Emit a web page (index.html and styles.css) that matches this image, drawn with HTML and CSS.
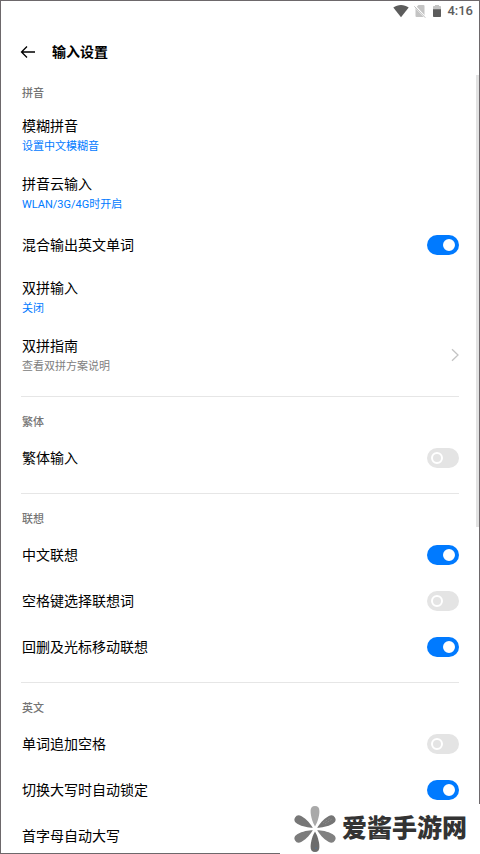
FILE: index.html
```html
<!DOCTYPE html>
<html lang="zh-CN">
<head>
<meta charset="utf-8">
<meta name="viewport" content="width=device-width, initial-scale=1">
<title>输入设置</title>
<link rel="stylesheet" href="styles.css">
</head>
<body>
<div class="screen">
  <div class="status-bar">
    <svg class="wifi" viewBox="0 0 16 14" aria-hidden="true"><path d="M0.3 3.6C4.8 0.1 11.2 0.1 15.7 3.6L8 13.3Z"/></svg>
    <svg class="sim" viewBox="0 0 12 14" aria-hidden="true"><path class="card" d="M4.5 1H9.5Q10.5 1 10.5 2V12Q10.5 13 9.5 13H2.5Q1.5 13 1.5 12V4Z"/><path class="gap" d="M0 1.2L12 14.2"/><path class="slash" d="M0.3 2.3L11.3 13.7"/></svg>
    <svg class="battery" viewBox="0 0 10 14" aria-hidden="true"><path class="empty" d="M3 1H7V2H8.2Q9 2 9 2.8V6H1V2.8Q1 2 1.8 2H3Z"/><path d="M1 5.3H9V12.2Q9 13 8.2 13H1.8Q1 13 1 12.2Z"/></svg>
    <span class="clock">4:16</span>
  </div>
  <header class="title-bar">
    <button class="back" type="button" aria-label="返回">
      <svg viewBox="0 0 16 14" aria-hidden="true"><path d="M15 7H1.5M7 1.5L1.5 7L7 12.5"/></svg>
    </button>
    <h1>输入设置</h1>
  </header>
  <main class="settings">
    <section class="group">
      <h2>拼音</h2>
      <a class="row tall" href="#fuzzy"><span class="text"><span class="name">模糊拼音</span><span class="value">设置中文模糊音</span></span></a>
      <a class="row tall" href="#cloud"><span class="text"><span class="name">拼音云输入</span><span class="value">WLAN/3G/4G时开启</span></span></a>
      <label class="row"><span class="name">混合输出英文单词</span><input class="switch" type="checkbox" checked></label>
      <a class="row tall" href="#double"><span class="text"><span class="name">双拼输入</span><span class="value">关闭</span></span></a>
      <a class="row tall" href="#guide"><span class="text"><span class="name">双拼指南</span><span class="value hint">查看双拼方案说明</span></span>
        <svg class="chevron" viewBox="0 0 8 14" aria-hidden="true"><path d="M1 1.2L7 7L1 12.8"/></svg></a>
    </section>
    <section class="group">
      <h2>繁体</h2>
      <label class="row"><span class="name">繁体输入</span><input class="switch" type="checkbox"></label>
    </section>
    <section class="group">
      <h2>联想</h2>
      <label class="row"><span class="name">中文联想</span><input class="switch" type="checkbox" checked></label>
      <label class="row"><span class="name">空格键选择联想词</span><input class="switch" type="checkbox"></label>
      <label class="row"><span class="name">回删及光标移动联想</span><input class="switch" type="checkbox" checked></label>
    </section>
    <section class="group">
      <h2>英文</h2>
      <label class="row"><span class="name">单词追加空格</span><input class="switch" type="checkbox"></label>
      <label class="row"><span class="name">切换大写时自动锁定</span><input class="switch" type="checkbox" checked></label>
      <label class="row"><span class="name">首字母自动大写</span><input class="switch" type="checkbox" checked></label>
    </section>
  </main>
  <div class="scroll-thumb"></div>
</div>
<div class="watermark">
  <svg viewBox="0 0 44 48" aria-hidden="true">
    <defs><path id="petal" d="M22 21.5C20 18 17.6 12 17.6 6Q17.6 1 22 1Q26.4 1 26.4 6C26.4 12 24 18 22 21.5Z"/></defs>
    <use href="#petal" fill="#a9a9a9"/>
    <use href="#petal" fill="#757575" transform="rotate(60 22 24)"/>
    <use href="#petal" fill="#808080" transform="rotate(120 22 24)"/>
    <use href="#petal" fill="#6c6c6c" transform="rotate(180 22 24)"/>
    <use href="#petal" fill="#7c7c7c" transform="rotate(240 22 24)"/>
    <use href="#petal" fill="#777777" transform="rotate(300 22 24)"/>
    <path d="M30 18L37 13M32 19L39 14" stroke="#929292" stroke-width="1" stroke-dasharray="1 1"/>
    <circle cx="23" cy="43" r="0.6" fill="#397fc8"/>
  </svg>
  <span>爱酱手游网</span>
</div>
</body>
</html>
```
FILE: styles.css
```css
*,
*::before {
  box-sizing: border-box;
}

body {
  margin: 0;
  background: #fff;
  color: #000;
  font-family: Roboto, "Noto Sans CJK SC", sans-serif;
  font-size: 14px;
}

.screen {
  position: relative;
  display: flex;
  flex-direction: column;
  height: 100vh;
  border: 1px solid #6d686b;
}

.status-bar {
  display: flex;
  flex: none;
  align-items: center;
  justify-content: flex-end;
  height: 20px;
  padding-right: 6px;
  fill: #5c5c5c;
  color: #5c5c5c;
}

.status-bar svg {
  height: 14px;
}

.wifi {
  width: 16px;
  margin-right: 5px;
}

.sim {
  width: 12px;
  margin-right: 6px;
}

.sim path {
  fill: none;
}

.sim .card {
  fill: #c4c4c4;
}

.sim .gap {
  stroke: #fff;
  stroke-width: 2;
}

.sim .slash {
  stroke: #bdbdbd;
}

.battery {
  width: 10px;
  margin-right: 5px;
}

.battery .empty {
  fill: #c4c4c4;
}

.clock {
  font-size: 13px;
  font-weight: 500;
  line-height: 20px;
}

.title-bar {
  display: flex;
  flex: none;
  align-items: center;
  height: 61px;
  padding: 0 19px;
  gap: 16px;
}

.back {
  display: flex;
  padding: 0;
  border: 0;
  background: none;
}

.back svg {
  width: 16px;
  height: 14px;
  fill: none;
  stroke: #000;
  stroke-width: 1.3;
}

h1 {
  margin: 0;
  font-size: 14px;
  font-weight: 700;
  line-height: 20px;
}

.settings {
  flex: 1;
  min-height: 0;
  overflow-y: auto;
  padding: 0 20px;
  scrollbar-width: none;
}

.group + .group {
  border-top: 1px solid #e6e6e6;
  margin-top: 12px;
  padding-top: 14px;
}

h2 {
  height: 24px;
  margin: 0;
  padding-left: 1px;
  color: #757575;
  font-size: 11px;
  font-weight: 500;
  line-height: 24px;
}

.row {
  display: flex;
  align-items: center;
  justify-content: space-between;
  min-height: 46px;
  padding-left: 1px;
  color: inherit;
  text-decoration: none;
}

.tall {
  min-height: 58px;
}

.text {
  display: flex;
  flex-direction: column;
  gap: 2px;
}

.name {
  line-height: 22px;
}

.value {
  color: #007aff;
  font-size: 11px;
  line-height: 16px;
}

.hint {
  color: #808080;
}

.chevron {
  width: 8px;
  height: 14px;
  fill: none;
  stroke: #c4c4c4;
  stroke-width: 1.3;
}

.switch {
  display: flex;
  align-items: center;
  width: 32px;
  height: 20px;
  margin: 0;
  padding: 0 4px;
  border-radius: 10px;
  background: #e4e4e4;
  appearance: none;
}

.switch::before {
  width: 12px;
  height: 12px;
  border: 2px solid #fff;
  border-radius: 50%;
  content: "";
}

.switch:checked {
  justify-content: flex-end;
  background: #007aff;
}

.switch:checked::before {
  background: #fff;
}

.scroll-thumb {
  position: absolute;
  top: 74px;
  right: 0;
  width: 3px;
  height: 53%;
  background: #e2e2e2;
}

.watermark {
  position: fixed;
  right: 0;
  bottom: 0;
  display: flex;
  align-items: center;
  gap: 5px;
  height: 50px;
  padding: 0 13px;
  background: #fff;
  color: #333;
  font-size: 25px;
  font-weight: 900;
  line-height: 50px;
}

.watermark svg {
  width: 44px;
  height: 48px;
}
```
